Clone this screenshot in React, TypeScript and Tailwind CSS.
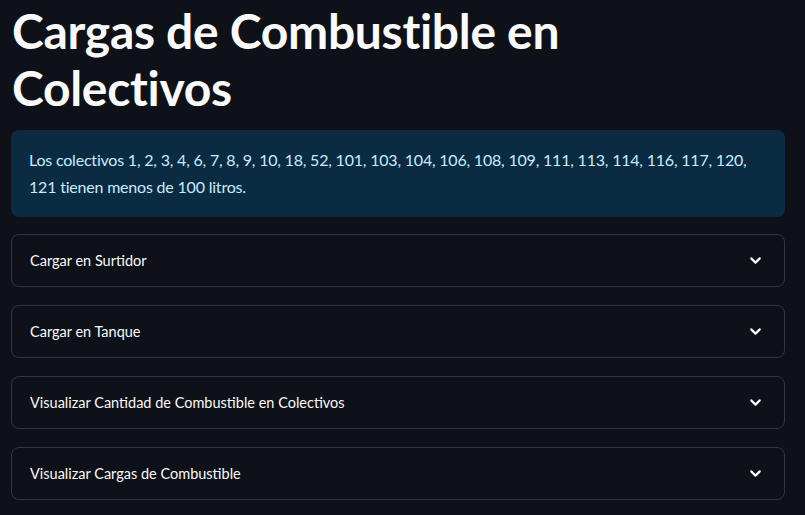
import { ChevronDown } from "lucide-react";

const sections = [
  "Cargar en Surtidor",
  "Cargar en Tanque",
  "Visualizar Cantidad de Combustible en Colectivos",
  "Visualizar Cargas de Combustible",
];

const Expander = ({ label }: { label: string }) => {
  return (
    <div className="h-[53px] rounded-lg border border-[#34363f] flex items-center justify-between pl-[18px] pr-[20px]">
      <span className="text-[14.5px] text-[#fafafa]">{label}</span>
      <ChevronDown size={17} strokeWidth={3} className="text-[#fafafa]" />
    </div>
  );
};

export default function App() {
  return (
    <div
      className="w-[805px] h-[515px] overflow-hidden bg-[#0e1117] pl-[11px] pr-[20px]"
      style={{ fontFamily: "Lato, 'Noto Sans', sans-serif" }}
    >
      <h1 className="text-[48px] font-bold leading-[57px] text-[#fafafa] pt-[2px] pl-px tracking-[-0.3px]">
        Cargas de Combustible en Colectivos
      </h1>
      <div className="mt-[14px] rounded-lg bg-[#0b2b42] px-[18px] pt-[16px] pb-[17px] text-[16px] leading-[27px] tracking-[-0.2px] text-[#c7ebff]">
        Los colectivos 1, 2, 3, 4, 6, 7, 8, 9, 10, 18, 52, 101, 103, 104, 106, 108, 109, 111, 113, 114, 116, 117, 120,
        121 tienen menos de 100 litros.
      </div>
      <div className="mt-[17px] flex flex-col gap-[18px]">
        {sections.map((s) => (
          <Expander key={s} label={s} />
        ))}
      </div>
    </div>
  );
}
